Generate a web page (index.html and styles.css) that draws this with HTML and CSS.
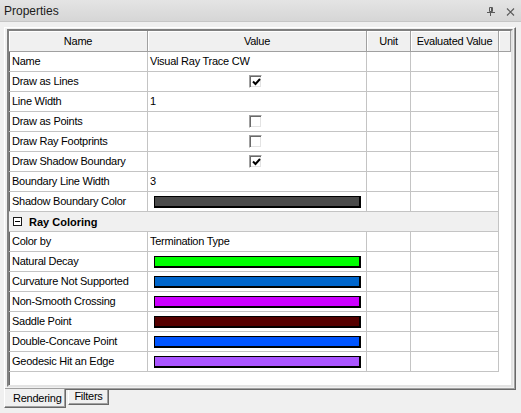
FILE: index.html
```html
<!DOCTYPE html>
<html>
<head>
<meta charset="utf-8">
<link rel="stylesheet" href="styles.css">
</head>
<body>
<div class="titlebar">
  <span class="title">Properties</span>
  <span class="btns">
    <svg class="pin" width="8" height="9" viewBox="0 0 8 9"><path d="M2.5 0.5h3v4h-3z" fill="none" stroke="#5a5a5a"/><path d="M4.5 0.5v4" stroke="#5a5a5a"/><path d="M0 5.5h8M3.5 5.5v3.5" stroke="#5a5a5a"/></svg>
    <svg class="close" width="9" height="8" viewBox="0 0 9 8"><path d="M1 0.5l7 7M8 0.5l-7 7" stroke="#5a5a5a" stroke-width="1.2"/></svg>
  </span>
</div>
<div class="page">
  <div class="grid">
    <div class="head">
      <div class="hc c1">Name</div>
      <div class="hc c2">Value</div>
      <div class="hc c3">Unit</div>
      <div class="hc c4">Evaluated Value</div>
      <div class="hc fill"></div>
    </div>
    <div class="row"><div class="c c1">Name</div><div class="c c2">Visual Ray Trace CW</div><div class="c c3"></div><div class="c c4"></div></div>
    <div class="row"><div class="c c1">Draw as Lines</div><div class="c c2"><span class="chk on"><svg width="9" height="8" viewBox="0 0 9 8"><path d="M1 3.5l2.5 2.5l4.5-5" fill="none" stroke="#000" stroke-width="2"/></svg></span></div><div class="c c3"></div><div class="c c4"></div></div>
    <div class="row"><div class="c c1">Line Width</div><div class="c c2">1</div><div class="c c3"></div><div class="c c4"></div></div>
    <div class="row"><div class="c c1">Draw as Points</div><div class="c c2"><span class="chk"></span></div><div class="c c3"></div><div class="c c4"></div></div>
    <div class="row"><div class="c c1">Draw Ray Footprints</div><div class="c c2"><span class="chk"></span></div><div class="c c3"></div><div class="c c4"></div></div>
    <div class="row"><div class="c c1">Draw Shadow Boundary</div><div class="c c2"><span class="chk on"><svg width="9" height="8" viewBox="0 0 9 8"><path d="M1 3.5l2.5 2.5l4.5-5" fill="none" stroke="#000" stroke-width="2"/></svg></span></div><div class="c c3"></div><div class="c c4"></div></div>
    <div class="row"><div class="c c1">Boundary Line Width</div><div class="c c2">3</div><div class="c c3"></div><div class="c c4"></div></div>
    <div class="row"><div class="c c1">Shadow Boundary Color</div><div class="c c2"><span class="sw sw-shadow"></span></div><div class="c c3"></div><div class="c c4"></div></div>
    <div class="cat"><span class="minus"></span><span class="catname">Ray Coloring</span></div>
    <div class="row"><div class="c c1">Color by</div><div class="c c2">Termination Type</div><div class="c c3"></div><div class="c c4"></div></div>
    <div class="row"><div class="c c1">Natural Decay</div><div class="c c2"><span class="sw sw-green"></span></div><div class="c c3"></div><div class="c c4"></div></div>
    <div class="row"><div class="c c1">Curvature Not Supported</div><div class="c c2"><span class="sw sw-blue"></span></div><div class="c c3"></div><div class="c c4"></div></div>
    <div class="row"><div class="c c1">Non-Smooth Crossing</div><div class="c c2"><span class="sw sw-magenta"></span></div><div class="c c3"></div><div class="c c4"></div></div>
    <div class="row"><div class="c c1">Saddle Point</div><div class="c c2"><span class="sw sw-maroon"></span></div><div class="c c3"></div><div class="c c4"></div></div>
    <div class="row"><div class="c c1">Double-Concave Point</div><div class="c c2"><span class="sw sw-bright"></span></div><div class="c c3"></div><div class="c c4"></div></div>
    <div class="row"><div class="c c1">Geodesic Hit an Edge</div><div class="c c2"><span class="sw sw-violet"></span></div><div class="c c3"></div><div class="c c4"></div></div>
  </div>
</div>
<div class="tabs">
  <div class="tab sel">Rendering</div>
  <div class="tab">Filters</div>
</div>
</body>
</html>
```
FILE: styles.css
```css
* { box-sizing: border-box; }
html, body { margin: 0; padding: 0; }
body {
  width: 521px;
  height: 413px;
  overflow: hidden;
  background: #f0f0f0;
  font-family: "Liberation Sans", Arial, sans-serif;
  font-size: 11px;
  letter-spacing: -0.25px;
  color: #000;
}
.titlebar {
  height: 22px;
  border-bottom: 1px solid #c6c6c6;
  background: linear-gradient(#e4e4e4, #d6d6d6);
  display: flex;
  align-items: center;
  justify-content: space-between;
  padding: 1px 6px 0 4px;
}
.title { font-size: 12px; letter-spacing: 0; color: #1a1a1a; }
.btns { display: flex; align-items: center; gap: 11px; padding-top: 1px; }
.btns svg { display: block; }

.page {
  margin: 5px 0 0 4px;
  width: 512px;
  height: 363px;
  border-top: 1px solid #fff;
  border-left: 1px solid #fff;
  border-right: 1px solid #696969;
  border-bottom: 1px solid #696969;
  box-shadow: inset -1px -1px 0 #a0a0a0;
  padding: 1px 2px 2px 2px;
}
.grid {
  width: 506px;
  height: 358px;
  background: #fff;
  border-top: 2px solid #808080;
  border-left: 2px solid #808080;
  border-right: 2px solid #e3e3e3;
  border-bottom: 2px solid #e3e3e3;
  box-shadow: inset 1px 1px 0 #696969;
}
.head { display: flex; height: 21px; }
.hc {
  height: 21px;
  background: #f0f0f0;
  border-right: 1px solid #a0a0a0;
  border-bottom: 1px solid #a0a0a0;
  box-shadow: inset 1px 1px 0 #fff;
  text-align: center;
  line-height: 20px;
}
.c1 { width: 139px; }
.c2 { width: 219px; }
.c3 { width: 44px; }
.c4 { width: 88px; }
.fill { width: 12px; }

.row { display: flex; height: 20px; }
.c {
  height: 20px;
  border-right: 1px solid #c4c4c4;
  border-bottom: 1px solid #c4c4c4;
  line-height: 19px;
  white-space: nowrap;
}
.row .c1 { padding-left: 3px; }
.row .c2 { padding-left: 2px; }

.chk {
  display: block;
  width: 13px;
  height: 13px;
  margin: 3px 0 0 99px;
  background: #fff;
  border-top: 1px solid #a0a0a0;
  border-left: 1px solid #a0a0a0;
  border-right: 1px solid #fff;
  border-bottom: 1px solid #fff;
  box-shadow: inset 1px 1px 0 #696969, inset -1px -1px 0 #e3e3e3;
}
.chk svg { display: block; margin: 2px 0 0 2px; }

.sw {
  display: block;
  width: 207px;
  height: 12px;
  margin: 4px 0 0 4px;
  border: 1px solid #000;
  box-shadow: inset -1px -1px 0 #000;
}
.sw-shadow { background: #4a4a4a; }
.sw-green { background: #00ff00; }
.sw-blue { background: #0066cc; }
.sw-magenta { background: #cc00ff; }
.sw-maroon { background: #550000; }
.sw-bright { background: #0055ff; }
.sw-violet { background: #aa55ff; }

.cat {
  display: flex;
  align-items: center;
  width: 490px;
  height: 20px;
  background: #f0f0f0;
  border-right: 1px solid #c4c4c4;
  border-bottom: 1px solid #c4c4c4;
  padding-left: 4px;
}
.minus {
  position: relative;
  width: 9px;
  height: 9px;
  border: 1px solid #1a1a1a;
  background: #fff;
  margin-top: -1px;
}
.minus::after {
  content: "";
  position: absolute;
  left: 1px;
  top: 3px;
  width: 5px;
  height: 1px;
  background: #000;
}
.catname { margin-left: 7px; font-weight: bold; letter-spacing: 0; }

.tabs { display: flex; padding-left: 4px; }
.tab {
  width: 41px;
  height: 15px;
  margin-left: 2px;
  text-align: center;
  background: #f0f0f0;
  border-left: 1px solid #fff;
  border-right: 1px solid #696969;
  border-bottom: 1px solid #696969;
  box-shadow: inset -1px -1px 0 #a0a0a0;
  line-height: 12px;
}
.tab.sel {
  margin-left: 0;
  margin-top: -1px;
  height: 19px;
  width: 62px;
  text-align: left;
  padding: 3px 0 0 8px;
  line-height: 13px;
}
```
